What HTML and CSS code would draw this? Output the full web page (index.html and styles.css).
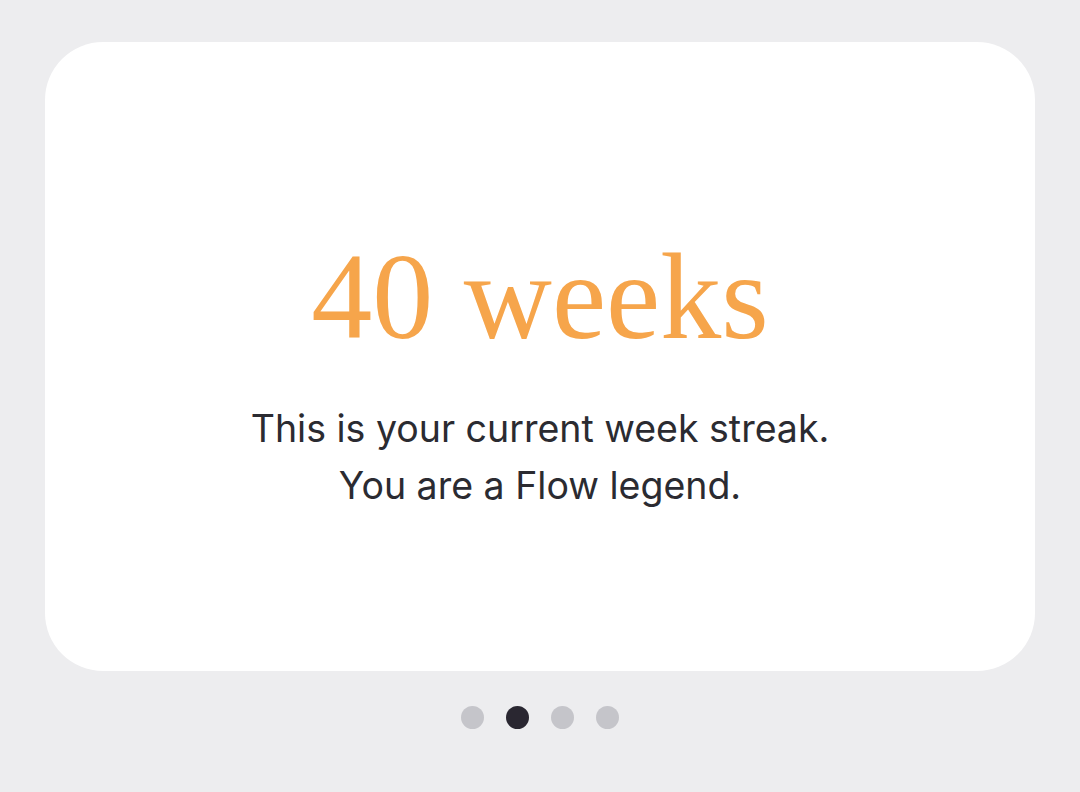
FILE: index.html
```html
<!DOCTYPE html>
<html lang="en">
<head>
<meta charset="utf-8">
<title>Streak</title>
<link rel="stylesheet" href="styles.css">
</head>
<body>
  <main class="screen">
    <section class="card">
      <h1 class="streak">40 weeks</h1>
      <p class="caption">This is your current week streak.<br>You are a Flow legend.</p>
    </section>
    <nav class="pager">
      <span class="dot"></span>
      <span class="dot active"></span>
      <span class="dot"></span>
      <span class="dot"></span>
    </nav>
  </main>
</body>
</html>
```

FILE: styles.css
```css
html, body {
  margin: 0;
  padding: 0;
  background: #ededef;
}

.screen {
  width: 1080px;
  height: 792px;
  padding: 42px 45px 0;
  box-sizing: border-box;
  display: flex;
  flex-direction: column;
  align-items: center;
}

.card {
  width: 100%;
  height: 629px;
  background: #ffffff;
  border-radius: 58px;
  display: flex;
  flex-direction: column;
  align-items: center;
  justify-content: center;
  padding-top: 36px;
  box-sizing: border-box;
}

.streak {
  margin: 0;
  font-family: "Liberation Serif", "Times New Roman", serif;
  font-weight: 400;
  font-size: 122px;
  line-height: 1;
  color: #f6a54b;
}

.caption {
  margin: 42px 0 0;
  font-family: Inter, "Noto Sans", sans-serif;
  font-size: 37.5px;
  line-height: 57px;
  color: #2b2b31;
  text-align: center;
}

.pager {
  display: flex;
  gap: 22px;
  margin-top: 35px;
}

.dot {
  width: 23px;
  height: 23px;
  border-radius: 50%;
  background: #c5c5ca;
}

.dot.active {
  background: #2a2731;
}
```
